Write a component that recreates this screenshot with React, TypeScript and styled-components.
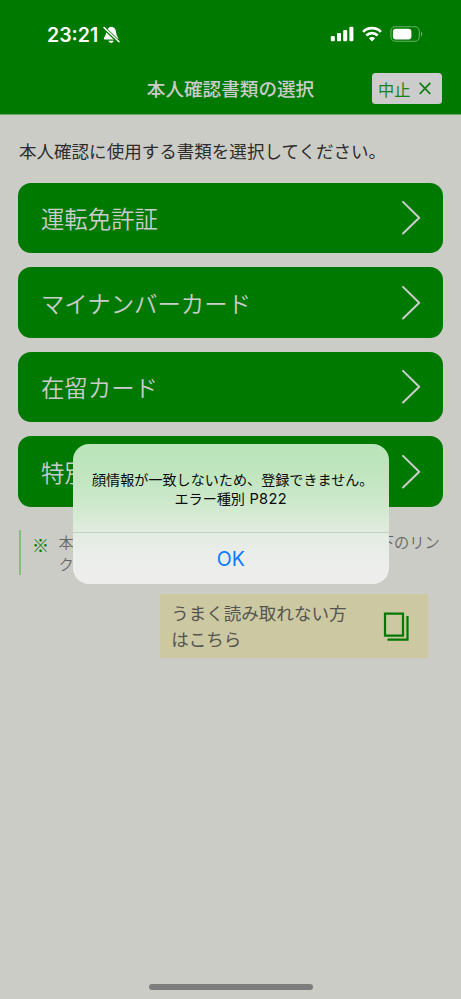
import React from "react";
import styled, { createGlobalStyle } from "styled-components";

const GlobalStyle = createGlobalStyle`
  * { box-sizing: border-box; }
  body {
    margin: 0;
    background: #cbccc6;
    font-family: "Noto Sans CJK JP", sans-serif;
  }
  button { font-family: inherit; border: 0; padding: 0; margin: 0; }
`;

const Screen = styled.div`
  position: relative;
  width: 461px;
  height: 999px;
  overflow: hidden;
  display: flex;
  flex-direction: column;
  background: #cbccc6;
`;

const Header = styled.header`
  height: 115px;
  flex: none;
  background: #007900;
  border-bottom: 1px solid #6aa968;
`;

const StatusBar = styled.div`
  height: 68px;
  padding: 0 38px 0 47px;
  display: flex;
  align-items: center;
  justify-content: space-between;
  color: #fff;
`;

const Clock = styled.div`
  display: flex;
  align-items: center;
  gap: 5px;
  padding-top: 1px;
  font: 600 19.5px/24px Inter, sans-serif;
  letter-spacing: 0;
`;

const StatusIcons = styled.div`
  display: flex;
  align-items: center;
  gap: 8px;
`;

const TitleBar = styled.div`
  height: 41px;
  padding: 0 19px;
  display: grid;
  grid-template-columns: 70px 1fr 70px;
  align-items: center;
`;

const Title = styled.h1`
  grid-column: 2;
  margin: 0;
  padding-bottom: 2px;
  color: #cccccc;
  font-size: 18.6px;
  line-height: 28px;
  font-weight: 500;
  text-align: center;
  white-space: nowrap;
`;

const CancelButton = styled.button`
  width: 70px;
  height: 31px;
  display: flex;
  align-items: center;
  padding-left: 6px;
  gap: 8px;
  border-radius: 3.5px;
  background: #cccccc;
  color: #1a801a;
  font-size: 16.2px;
  line-height: 24px;
`;

const Main = styled.main`
  flex: 1;
  padding: 22px 17.7px 0;
`;

const Intro = styled.p`
  margin: 0 0 19px 1.3px;
  color: #2d2d2d;
  font-size: 17.55px;
  line-height: 27px;
  white-space: nowrap;
`;

const CardList = styled.div`
  display: flex;
  flex-direction: column;
  gap: 14.2px;
`;

const Card = styled.button`
  width: 425.6px;
  height: 70.3px;
  padding: 0 22px 0 23.3px;
  display: flex;
  align-items: center;
  justify-content: space-between;
  border-radius: 13px;
  background: #007900;
  color: #cccccc;
  font-size: 23.4px;
  font-weight: 350;
  line-height: 34px;
`;

const Note = styled.div`
  height: 45px;
  margin: 23.5px 0 0 1.3px;
  padding-left: 11px;
  display: flex;
  border-left: 2px solid #86bd83;
`;

const NoteMark = styled.span`
  width: 26.5px;
  flex: none;
  color: #007900;
  font-size: 17px;
  font-weight: 350;
  line-height: 29px;
`;

const NoteText = styled.p`
  margin: 0;
  color: #676767;
  font-size: 15.25px;
  font-weight: 350;
  line-height: 22px;
  white-space: nowrap;
`;

const HelpLink = styled.a`
  width: 268px;
  height: 64px;
  margin: 19px 0 0 142px;
  padding: 0 18.5px 0 11.5px;
  display: flex;
  align-items: center;
  justify-content: space-between;
  background: #ccc8a2;
  color: #555550;
  font-size: 17.55px;
  line-height: 26px;
`;

const Alert = styled.section`
  position: absolute;
  left: 72.5px;
  top: 444px;
  width: 316.5px;
  height: 140px;
  display: flex;
  flex-direction: column;
  overflow: hidden;
  border-radius: 16px;
  background: linear-gradient(180deg, #bae4ba 0%, #bfe5be 20%, #cce8ca 40%, #dcebda 58%, #e4ece3 66%, #ebedea 80%, #eeefed 100%);
`;

const AlertMessage = styled.div`
  height: 88.5px;
  flex: none;
  padding-top: 26px;
  display: flex;
  flex-direction: column;
  align-items: center;
  border-bottom: 1px solid #c3d0c2;
  color: #080908;
  font-size: 14.1px;
  line-height: 19px;
  white-space: nowrap;
`;

const Reason = styled.span`
  padding-left: 4px;
`;

const ErrorKind = styled.span`
  display: flex;
  align-items: baseline;
  gap: 4.5px;
`;

const ErrorCode = styled.span`
  font-family: Inter, sans-serif;
  font-size: 14.6px;
  letter-spacing: 0.35px;
`;

const AlertAction = styled.button`
  flex: 1;
  padding-top: 1px;
  background: transparent;
  color: #087aff;
  && { font: 400 19.5px/24px Inter, sans-serif; }
`;

const HomeIndicator = styled.div`
  position: absolute;
  left: 148.5px;
  bottom: 9.5px;
  width: 164px;
  height: 6px;
  border-radius: 3px;
  background: #7d7d7d;
`;

const MutedBell = () => (
  <svg width="17" height="18" viewBox="0 0 17 18">
    <path d="M8.2.8C6.6.8 5.5 2 4 3.5 2.9 6.8 3.2 9 1.2 11.4.5 12.5.8 13.5 2 13.5h12c1.4 0 1.7-1 .9-2-1.8-2.3-1.4-5.1-2.5-7.9C11.5 1.8 10 .8 8.2.8Z" fill="#fff" />
    <path d="M5.5 14.8h5.2c-.4 2.7-4.8 2.7-5.2 0Z" fill="#fff" />
    <path d="m.5 1.4 15.8 15" stroke="#007900" strokeWidth="3.4" />
    <path d="m1 1.5 15 14.2" stroke="#fff" strokeWidth="1.5" strokeLinecap="round" />
  </svg>
);

const Signal = () => (
  <svg width="24" height="16" viewBox="0 0 24 16" fill="#fff">
    <rect x=".8" y="10" width="4" height="5.3" rx="1" />
    <rect x="7" y="7" width="4" height="8.3" rx="1" />
    <rect x="13.2" y="4" width="4" height="11.3" rx="1" />
    <rect x="19.4" y=".7" width="4" height="14.6" rx="1" />
  </svg>
);

const Wifi = () => (
  <svg width="20" height="16" viewBox="0 0 20 16" fill="none" stroke="#fff" strokeWidth="2.7">
    <path d="M1.1 5.9a12.6 12.6 0 0 1 17.8 0" />
    <path d="M4.3 9.5a8.1 8.1 0 0 1 11.4 0" />
    <path d="M6.9 12.2c1.7-1.6 4.5-1.6 6.2 0L10 15.4Z" fill="#fff" stroke="none" />
  </svg>
);

const Battery = () => (
  <svg width="33" height="16" viewBox="0 0 33 16">
    <rect x=".9" y=".8" width="28.4" height="14.4" rx="4.5" fill="none" stroke="#69b169" strokeWidth="1.1" />
    <rect x="2.9" y="2.8" width="18.5" height="10.6" rx="3" fill="#fff" />
    <path d="M31 5.7c1.7.7 1.7 4 0 4.7Z" fill="#69b169" />
  </svg>
);

const CloseIcon = () => (
  <svg width="13" height="13" viewBox="0 0 13 13" fill="none" stroke="#0f7e0f" strokeWidth="1.8">
    <path d="m1.7.8 10.6 11.2M12.3.8 1.7 12" />
  </svg>
);

const Chevron = () => (
  <svg width="20" height="36" viewBox="0 0 20 36" fill="none" stroke="#cccccc" strokeWidth="2" strokeLinecap="round" strokeLinejoin="round">
    <path d="M2 1.9 18.2 17.8 2 33.5" />
  </svg>
);

const WindowIcon = () => (
  <svg width="26" height="29" viewBox="0 0 26 29" fill="none" stroke="#007900" strokeWidth="2.2">
    <path d="M2 1.7h18v22H2ZM4.5 27.7h20V4" />
  </svg>
);

const documents = ["運転免許証", "マイナンバーカード", "在留カード", "特別永住者証明書"];

export default function App() {
  return (
    <>
      <GlobalStyle />
      <Screen>
        <Header>
          <StatusBar>
            <Clock>23:21<MutedBell /></Clock>
            <StatusIcons><Signal /><Wifi /><Battery /></StatusIcons>
          </StatusBar>
          <TitleBar>
            <Title>本人確認書類の選択</Title>
            <CancelButton>中止<CloseIcon /></CancelButton>
          </TitleBar>
        </Header>
        <Main>
          <Intro>本人確認に使用する書類を選択してください。</Intro>
          <CardList>
            {documents.map((name) => (
              <Card key={name}>{name}<Chevron /></Card>
            ))}
          </CardList>
          <Note>
            <NoteMark>※</NoteMark>
            <NoteText>
              本人確認書類をうまく読み取れない場合は、以下のリン<br />クをご確認ください。
            </NoteText>
          </Note>
          <HelpLink>
            <span>うまく読み取れない方<br />はこちら</span>
            <WindowIcon />
          </HelpLink>
        </Main>
        <Alert role="alertdialog">
          <AlertMessage>
            <Reason>顔情報が一致しないため、登録できません。</Reason>
            <ErrorKind>エラー種別<ErrorCode>P822</ErrorCode></ErrorKind>
          </AlertMessage>
          <AlertAction>OK</AlertAction>
        </Alert>
        <HomeIndicator />
      </Screen>
    </>
  );
}
